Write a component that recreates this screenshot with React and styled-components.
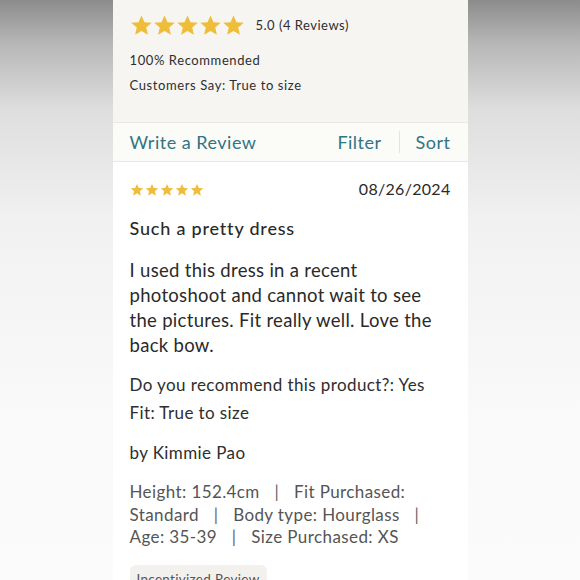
import React from "react";
import styled, { createGlobalStyle } from "styled-components";

const GlobalStyle = createGlobalStyle`
  html, body {
    margin: 0;
    padding: 0;
  }
  body {
    width: 580px;
    height: 580px;
    overflow: hidden;
    font-family: Lato, "Noto Sans", sans-serif;
    color: #2a2a2a;
    background: linear-gradient(
      to bottom,
      #8c8c8c 0px,
      #b8b8b8 45px,
      #dedede 110px,
      #f1f1f1 220px,
      #f9f9f9 400px,
      #fbfbfb 580px
    );
  }
`;

const Card = styled.div`
  width: 355px;
  height: 580px;
  margin: 0 auto;
  background: #fff;
  display: flex;
  flex-direction: column;
  overflow: hidden;

  & > * {
    flex-shrink: 0;
  }
`;

const Summary = styled.section`
  background: #f6f5f2;
  padding: 12px 17px 0;
  height: 110px;
  border-bottom: 1px solid #e9e8e4;
`;

const RatingRow = styled.div`
  display: flex;
  align-items: center;
  gap: 11px;
  height: 26px;
`;

const Stars = styled.div`
  display: flex;
  gap: ${(p) => p.$gap}px;
`;

const SummaryText = styled.div`
  font-size: 13px;
  letter-spacing: ${(p) => p.$spacing ?? 0.6}px;
  color: #2e2e2e;
  margin-top: ${(p) => p.$top || 0}px;
`;

const Nav = styled.nav`
  display: flex;
  align-items: center;
  height: 38px;
  padding: 0 17px;
  background: #fbfbf8;
  border-bottom: 1px solid #e9e8e4;
`;

const NavLink = styled.a`
  color: #2f7584;
  font-size: 18px;
  letter-spacing: 0.5px;
  text-decoration: none;
`;

const Spacer = styled.div`
  flex: 1;
`;

const Divider = styled.span`
  width: 1px;
  height: 22px;
  background: #e4e4e0;
  margin: 0 16px 0 17px;
`;

const Review = styled.article`
  padding: 18px 17px 0;
`;

const MetaRow = styled.div`
  display: flex;
  justify-content: space-between;
  align-items: center;
  height: 20px;
`;

const ReviewDate = styled.span`
  font-size: 16px;
  letter-spacing: 0.3px;
  margin-top: -3px;
`;

const Title = styled.h3`
  margin: 16px 0 0;
  font-size: 18px;
  font-weight: 500;
  letter-spacing: 0.8px;
  line-height: 24px;
`;

const Body = styled.p`
  margin: 18px 0 0;
  font-size: 18.5px;
  line-height: 25px;
  letter-spacing: 0.3px;
`;

const Line = styled.p`
  margin: ${(p) => p.$top}px 0 0;
  font-size: 17px;
  line-height: ${(p) => (p.$muted ? 22.5 : 22)}px;
  letter-spacing: 0.4px;
  color: ${(p) => (p.$muted ? "#555555" : "#2e2e2e")};
`;

const Pipe = styled.span`
  display: inline-block;
  margin: 0 10px;
  color: #666;
`;

const Tag = styled.span`
  display: inline-block;
  margin-top: 16px;
  padding: 6px 7px;
  border-radius: 6px;
  background: #f3f1ee;
  font-size: 13.5px;
  color: #555;
  letter-spacing: 0.3px;
`;

const Star = ({ size }) => (
  <svg width={size} height={size} viewBox="0 0 24 24">
    <path
      d="M12 1.5l3.1 7.1 7.6.6-5.8 5 1.8 7.5L12 17.7l-6.7 4 1.8-7.5-5.8-5 7.6-.6z"
      fill="#eebd3a"
    />
  </svg>
);

const StarRow = ({ size, gap }) => (
  <Stars $gap={gap}>
    {[0, 1, 2, 3, 4].map((i) => (
      <Star key={i} size={size} />
    ))}
  </Stars>
);

const details = [
  "Height: 152.4cm",
  "Fit Purchased: Standard",
  "Body type: Hourglass",
  "Age: 35-39",
  "Size Purchased: XS",
];

export default function App() {
  return (
    <>
      <GlobalStyle />
      <Card>
        <Summary>
          <RatingRow>
            <StarRow size={23} gap={-1} />
            <SummaryText $spacing={0.5}>5.0 (4 Reviews)</SummaryText>
          </RatingRow>
          <SummaryText $top={14}>100% Recommended</SummaryText>
          <SummaryText $top={9}>Customers Say: True to size</SummaryText>
        </Summary>
        <Nav>
          <NavLink href="#">Write a Review</NavLink>
          <Spacer />
          <NavLink href="#">Filter</NavLink>
          <Divider />
          <NavLink href="#">Sort</NavLink>
        </Nav>
        <Review>
          <MetaRow>
            <StarRow size={14} gap={1} />
            <ReviewDate>08/26/2024</ReviewDate>
          </MetaRow>
          <Title>Such a pretty dress</Title>
          <Body>
            I used this dress in a recent photoshoot and cannot wait to see the
            pictures. Fit really well. Love the back bow.
          </Body>
          <Line $top={16}>Do you recommend this product?: Yes</Line>
          <Line $top={6}>Fit: True to size</Line>
          <Line $top={18}>by Kimmie Pao</Line>
          <Line $top={17} $muted>
            {details.map((d, i) => (
              <React.Fragment key={d}>
                {d}
                {i < details.length - 1 && (
                  <>
                    {" "}
                    <Pipe>|</Pipe>{" "}
                  </>
                )}
              </React.Fragment>
            ))}
          </Line>
          <Tag>Incentivized Review</Tag>
        </Review>
      </Card>
    </>
  );
}
